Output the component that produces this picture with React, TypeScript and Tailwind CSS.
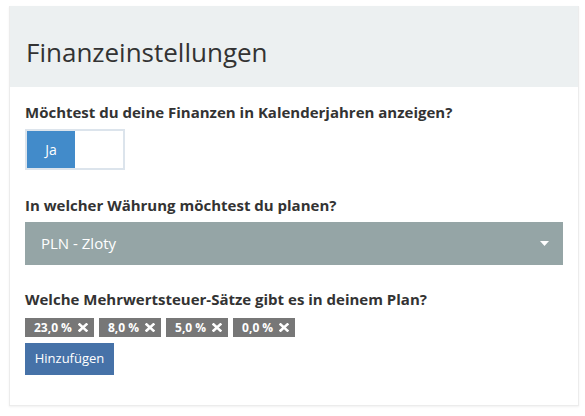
import React from "react";

const tags = ["23,0 %", "8,0 %", "5,0 %", "0,0 %"];

function XIcon() {
  return (
    <svg width="10" height="9" viewBox="0 0 10 9" className="ml-[6px]">
      <path d="M1.6 1.4 L8.4 7.6 M8.4 1.4 L1.6 7.6" stroke="white" strokeWidth="2.6" strokeLinecap="square" />
    </svg>
  );
}

export default function App() {
  return (
    <div className="min-h-[416px] w-[585px] bg-white pt-[6px] pl-[9px]" style={{ fontFamily: '"Open Sans", sans-serif' }}>
      <div className="w-[570px] border-x border-b border-[#ececec] bg-white shadow-[0_1px_2px_rgba(0,0,0,0.06)]">
        <div className="flex h-[81px] items-center bg-[#ecf0f1] pl-[16px] pt-[11px]">
          <h1 className="text-[26px] font-normal leading-none text-[#333]">Finanzeinstellungen</h1>
        </div>
        <div className="px-[15px] pt-[15px] pb-[30px]">
          <div className="text-[15px] font-bold leading-[21px] text-[#333]">
            Möchtest du deine Finanzen in Kalenderjahren anzeigen?
          </div>
          <div className="mt-[6px] flex h-[41px] w-[100px] border-2 border-[#dce4ec] bg-white">
            <div className="flex w-[48px] items-center justify-center bg-[#428bca] text-[14px] text-white">Ja</div>
          </div>
          <div className="mt-[25px] text-[15px] font-bold leading-[21px] text-[#333]">
            In welcher Währung möchtest du planen?
          </div>
          <div className="mt-[6px] flex h-[43px] w-[538px] items-center justify-between bg-[#95a5a6] pl-[16px] pr-[14px]">
            <span className="text-[15px] text-white">PLN - Zloty</span>
            <svg width="9" height="5" viewBox="0 0 9 5">
              <path d="M0 0 H9 L4.5 5 Z" fill="white" />
            </svg>
          </div>
          <div className="mt-[24px] text-[15px] font-bold leading-[21px] text-[#333]">
            Welche Mehrwertsteuer-Sätze gibt es in deinem Plan?
          </div>
          <div className="mt-[8px] flex gap-[5px]">
            {tags.map((t) => (
              <span key={t} className="flex h-[19px] items-center bg-[#777] pl-[9px] pr-[6px] text-[12px] font-bold leading-none text-white">
                {t}
                <XIcon />
              </span>
            ))}
          </div>
          <button className="mt-[6px] flex h-[32px] w-[89px] items-center justify-center bg-[#4672a8] text-[13px] text-white">
            Hinzufügen
          </button>
        </div>
      </div>
    </div>
  );
}
